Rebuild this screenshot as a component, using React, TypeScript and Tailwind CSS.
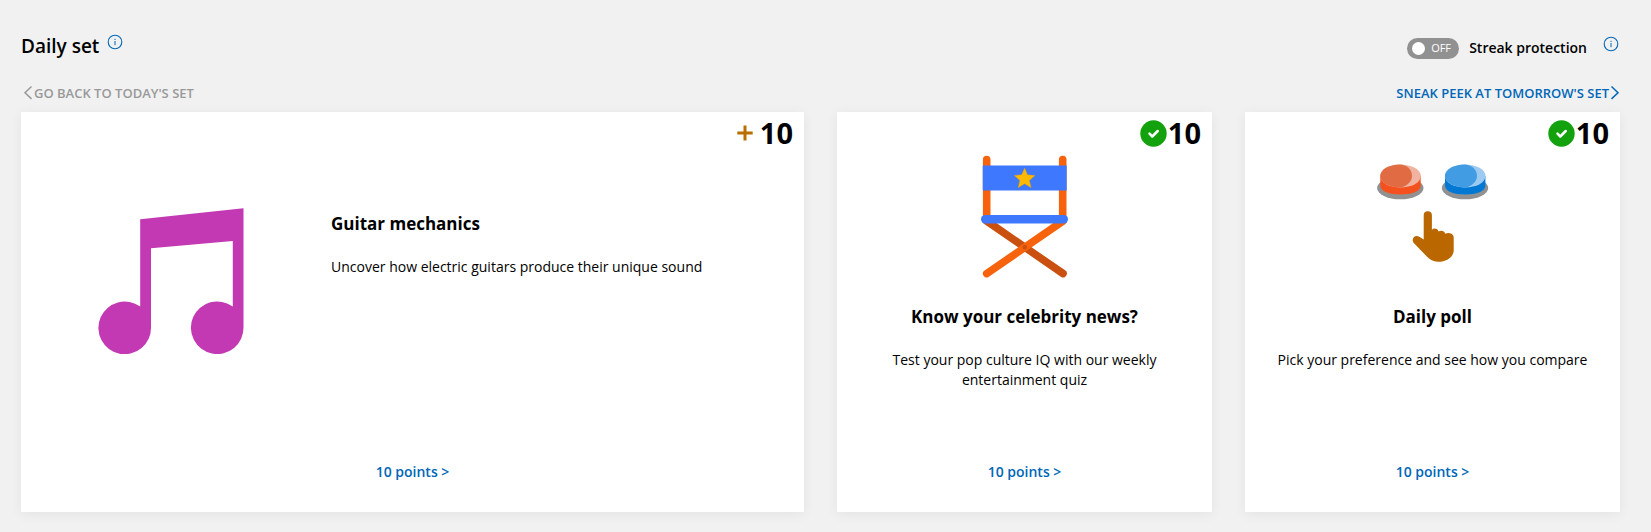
import { useState } from "react";
import type { ReactNode } from "react";

function InfoIcon() {
  return (
    <svg className="size-4" viewBox="0 0 16 16" fill="none" stroke="#0067b8" aria-hidden="true">
      <circle cx="8" cy="8" r="6.8" strokeWidth="1.1" />
      <path d="M8 7v4.2M8 4.8v1.2" strokeWidth="1" />
    </svg>
  );
}

function Chevron({ direction }: { direction: "left" | "right" }) {
  return (
    <svg className="h-4 w-2.5" viewBox="0 0 10 16" fill="none" stroke="currentColor" strokeWidth="1.5" aria-hidden="true">
      <path d={direction === "left" ? "M8.5 1.5 2 7.7l6.5 6.2" : "M1.5 1.5 8 7.7l-6.5 6.2"} />
    </svg>
  );
}

function MusicArt() {
  return (
    <svg className="size-[146px]" viewBox="0 0 146 146" fill="#c239b3" aria-hidden="true">
      <path d="M42.2 11.2 145.5 .3V119.3A26.3 26.3 0 1 1 134.8 98.6V33L53 40.3V119.3A26.3 26.3 0 1 1 42.2 98.6Z" />
    </svg>
  );
}

function ChairArt() {
  return (
    <svg className="h-[124px] w-[90px]" viewBox="0 0 90 124" aria-hidden="true">
      <g strokeLinecap="round" fill="none" strokeWidth="7.6">
        <path d="M6 66.5 83 119.5" stroke="#ca5010" />
        <path d="M83 67 6.7 119.6" stroke="#f7630c" />
        <path d="M6.7 5.5V64M82.7 5.5V64" stroke="#f7630c" />
      </g>
      <rect x="2.7" y="11.5" width="84" height="25" fill="#3e78ff" />
      <rect x="1" y="61" width="87" height="8.4" rx="4.2" fill="#3e78ff" />
      <circle cx="44.8" cy="93.2" r="2.2" fill="#ca5010" />
      <path d="m44.6 14 2.9 6.8 7.5.7-5.6 4.9 1.7 7.3-6.5-3.9-6.5 3.9 1.7-7.3-5.6-4.9 7.5-.7Z" fill="#ffb900" stroke="#d99a10" strokeWidth=".4" strokeLinejoin="round" />
    </svg>
  );
}

function PollArt() {
  return (
    <svg className="h-[100px] w-[112px]" viewBox="0 0 112 100" aria-hidden="true">
      <ellipse cx="23.3" cy="24" rx="23.2" ry="11.3" fill="#919191" />
      <path d="M3.3 12v9.5c0 6 9 9 20.2 9s20.2-3 20.2-9V12Z" fill="#f4511f" />
      <ellipse cx="23.5" cy="12" rx="20.3" ry="11.5" fill="#f0b3a0" />
      <path d="M22.5.5c7.4 0 12.5 5 12.5 11.5 0 5.5-4.5 9.5-11 11.5C12 23.5 3.2 18.4 3.2 12S12 .5 22.5.5Z" fill="#e16b43" />
      <ellipse cx="88" cy="24" rx="23.2" ry="11.3" fill="#919191" />
      <path d="M68 12v9.5c0 6 9 9 20.2 9s20.2-3 20.2-9V12Z" fill="#0078d4" />
      <ellipse cx="88.2" cy="12" rx="20.3" ry="11.5" fill="#9dcaf0" />
      <path d="M87.2.5c7.4 0 12.8 5 12.8 11.5 0 5.5-4.5 9.5-11 11.5C77 23.5 67.9 18.4 67.9 12S77 .5 87.2.5Z" fill="#429ce3" />
      <path d="M46.7 51.4a4 4 0 0 1 8.2 0V65.7c1.9-1.8 5.8-1.5 6.6 1.8 2.3-1.5 6-.8 6.9 2.2 3.3-1.5 7.9-.2 8.3 3.4V87c-.8 6.5-7.2 10.8-15.4 10.8-3.6 0-7.2-1.4-10.2-4L37.3 79.6c-4-4.3.4-10.2 5.4-6.5l4 2.5Z" fill="#ba6700" />
    </svg>
  );
}

function Points({ done }: { done: boolean }) {
  return (
    <div className="absolute top-[3px] right-[11px] flex h-9 items-center gap-px text-[29px] font-bold">
      {done ? (
        <svg className="size-[27px]" viewBox="0 0 27 27" fill="none" aria-label="Completed">
          <circle cx="13.5" cy="13.5" r="13.2" fill="#13a10e" />
          <path d="m9.5 13.7 2.8 2.8 5.4-5.5" stroke="#fff" strokeWidth="2.5" strokeLinecap="round" strokeLinejoin="round" />
        </svg>
      ) : (
        <svg className="mr-1.5 size-4" viewBox="0 0 16 16" stroke="#ba6f00" strokeWidth="3" aria-label="Available">
          <path d="M8 .5v15M.3 8h15.4" />
        </svg>
      )}
      <span>10</span>
    </div>
  );
}

type CardProps = { title: string; text: string; art: ReactNode; done?: boolean; wide?: boolean };

function Card({ title, text, art, done = false, wide = false }: CardProps) {
  return (
    <article className={`relative flex h-[400px] flex-col bg-white shadow-[0_2px_12px_rgba(0,0,0,0.06)] ${wide ? "col-span-2" : "text-center"}`}>
      <div className={wide ? "flex flex-1 pt-24" : "flex flex-1 flex-col pt-[42px]"}>
        <div className={wide ? "flex w-[310px] shrink-0 pl-[77px]" : "flex h-[147px] justify-center"}>{art}</div>
        <div className={wide ? "pr-6" : "px-7"}>
          <h3 className="text-[17px] leading-8 font-bold">{title}</h3>
          <p className="mt-[17px] text-sm leading-5">{text}</p>
        </div>
      </div>
      <a href="#points" className="mx-auto mb-7 text-sm leading-6 font-semibold text-[#0067b8]">
        10 points &gt;
      </a>
      <Points done={done} />
    </article>
  );
}

export default function App() {
  const [streak, setStreak] = useState(false);
  return (
    <main className="min-h-screen bg-[#f1f1f1] pt-8 pr-[31px] pb-5 pl-[21px] font-['Open_Sans','Noto_Sans',sans-serif] text-black">
      <header className="flex h-8 justify-between">
        <div className="flex gap-2">
          <h2 className="text-[19px] leading-7 font-semibold">Daily set</h2>
          <button type="button" aria-label="About the daily set" className="mt-0.5 h-4">
            <InfoIcon />
          </button>
        </div>
        <div className="flex">
          <label className="flex h-8 items-center gap-2.5 text-sm font-semibold">
            <input type="checkbox" role="switch" checked={streak} onChange={() => setStreak(!streak)} className="sr-only" />
            <span className={`flex h-[21px] w-[52px] items-center gap-1.5 rounded-full px-[5px] text-[11px] font-normal text-white ${streak ? "flex-row-reverse bg-[#0067b8]" : "bg-[#919191]"}`}>
              <span className="size-[13px] rounded-full bg-white" />
              {streak ? "ON" : "OFF"}
            </span>
            Streak protection
          </label>
          <button type="button" aria-label="About streak protection" className="mt-1 mr-px ml-4 h-4">
            <InfoIcon />
          </button>
        </div>
      </header>
      <nav className="flex justify-between pt-[19px] pb-[9px] text-[13px] leading-5 font-semibold">
        <button type="button" disabled className="flex items-center gap-px pl-0.5 text-[#999999]">
          <Chevron direction="left" />
          GO BACK TO TODAY'S SET
        </button>
        <a href="#tomorrow" className="flex items-center gap-px text-[#0067b8]">
          SNEAK PEEK AT TOMORROW'S SET
          <Chevron direction="right" />
        </a>
      </nav>
      <section className="grid grid-cols-4 gap-[33px]">
        <Card wide title="Guitar mechanics" text="Uncover how electric guitars produce their unique sound" art={<MusicArt />} />
        <Card done title="Know your celebrity news?" text="Test your pop culture IQ with our weekly entertainment quiz" art={<ChairArt />} />
        <Card done title="Daily poll" text="Pick your preference and see how you compare" art={<div className="pt-2.5"><PollArt /></div>} />
      </section>
    </main>
  );
}
